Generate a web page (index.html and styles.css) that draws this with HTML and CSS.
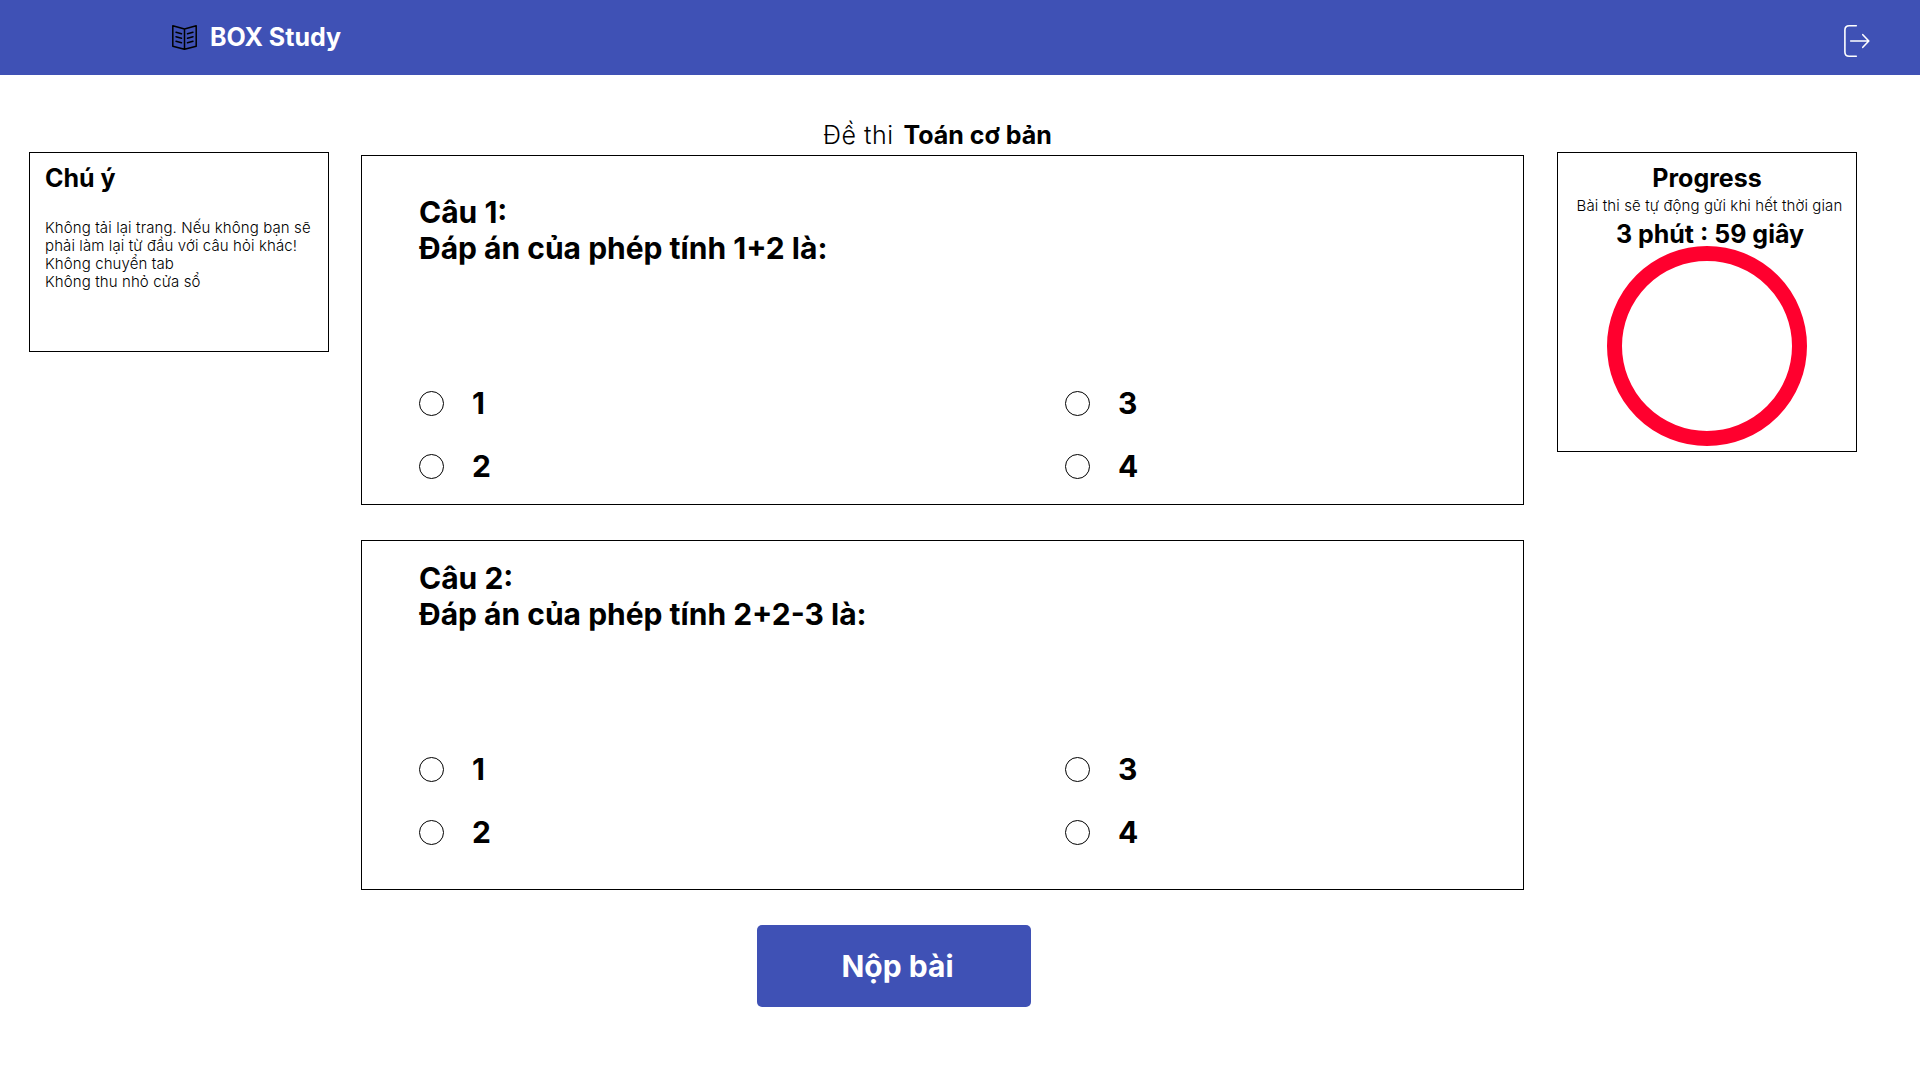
FILE: index.html
```html
<!DOCTYPE html>
<html lang="vi">
<head>
<meta charset="utf-8">
<title>BOX Study</title>
<link rel="stylesheet" href="styles.css">
</head>
<body>
<header class="header">
  <div class="brand">
    <svg class="book" viewBox="0 0 25 25" fill="none" stroke="#000" stroke-width="1.5" stroke-linejoin="round" stroke-linecap="round">
      <path d="M.8.8 12.5 4 24.2.8V21.2L12.5 24.3.8 21.2ZM12.5 4V24.3"/>
      <path d="M4 7.3 9.5 8.8M4 11.8 9.5 13.3M4 16.3 9.5 17.8M21 7.3 15.5 8.8M21 11.8 15.5 13.3M21 16.3 15.5 17.8"/>
    </svg>
    <span class="brand-name">BOX Study</span>
  </div>
  <svg class="logout" viewBox="0 0 26 34" fill="none" stroke="#fff" stroke-width="1.6" stroke-linecap="round" stroke-linejoin="round">
    <path d="M12.3 1.7H5.2Q.9 1.7.9 6V28Q.9 32.3 5.2 32.3H12.3M6.7 17H24.5M18.8 10.7 24.8 17 18.8 23.3"/>
  </svg>
</header>
<div class="page">
  <aside class="panel notice">
    <h2 class="panel-title">Chú ý</h2>
    <p class="small">Không tải lại trang. Nếu không bạn sẽ<br>phải làm lại từ đầu với câu hỏi khác!<br>Không chuyển tab<br>Không thu nhỏ cửa sổ</p>
  </aside>
  <main class="exam">
    <h1 class="exam-title"><span class="exam-label">Đề thi</span><span>Toán cơ bản</span></h1>
    <section class="question first">
      <h3 class="prompt">Câu 1:<br>Đáp án của phép tính 1+2 là:</h3>
      <div class="answers">
        <label class="answer"><input class="radio" type="radio" name="q1">1</label>
        <label class="answer"><input class="radio" type="radio" name="q1">3</label>
        <label class="answer"><input class="radio" type="radio" name="q1">2</label>
        <label class="answer"><input class="radio" type="radio" name="q1">4</label>
      </div>
    </section>
    <section class="question">
      <h3 class="prompt">Câu 2:<br>Đáp án của phép tính 2+2-3 là:</h3>
      <div class="answers">
        <label class="answer"><input class="radio" type="radio" name="q2">1</label>
        <label class="answer"><input class="radio" type="radio" name="q2">3</label>
        <label class="answer"><input class="radio" type="radio" name="q2">2</label>
        <label class="answer"><input class="radio" type="radio" name="q2">4</label>
      </div>
    </section>
    <button class="submit">Nộp bài</button>
  </main>
  <aside class="panel progress">
    <h2 class="panel-title">Progress</h2>
    <p class="small auto-send">Bài thi sẽ tự động gửi khi hết thời gian</p>
    <p class="panel-title timer">3 phút : 59 giây</p>
    <div class="ring"></div>
  </aside>
</div>
</body>
</html>
```
FILE: styles.css
```css
* { box-sizing: border-box; margin: 0; padding: 0; }
body { background: #fff; color: #000; font-family: Inter, sans-serif; height: 1080px; overflow: hidden; }
.header { height: 75px; background: #3f51b5; display: flex; justify-content: space-between; align-items: flex-start; padding: 22px 50px 0 172px; }
.brand { display: flex; align-items: flex-start; gap: 13px; }
.book { width: 25px; height: 25px; margin-top: 3px; }
.brand-name { font-size: 25px; line-height: 30px; font-weight: 700; color: #fff; }
.logout { width: 26px; height: 34px; margin-top: 2px; }
.page { display: grid; grid-template-columns: 300px 1163px 300px; column-gap: 32px; padding: 45px 0 0 29px; align-items: start; }
.panel { border: 1px solid #000; margin-top: 32px; }
.notice { height: 200px; padding: 10px 0 0 15px; }
.panel-title { font-size: 25px; line-height: 30px; font-weight: 700; white-space: nowrap; }
.small { font-size: 15px; line-height: 18px; font-weight: 300; letter-spacing: .11px; white-space: nowrap; }
.notice .small { margin-top: 26px; }
.progress { width: 300px; height: 300px; padding-top: 10px; margin-left: 1px; display: flex; flex-direction: column; align-items: center; }
.auto-send { margin: 4px 0 4px 5px; }
.timer { margin-left: 6px; }
.ring { width: 200px; height: 200px; flex: none; margin-top: -3px; border: 15px solid #ff002e; border-radius: 50%; }
.exam { display: flex; flex-direction: column; }
.exam-title { display: flex; gap: 10px; padding-left: 462px; height: 35px; font-size: 25px; line-height: 30px; font-weight: 700; white-space: nowrap; }
.exam-label { font-weight: 300; letter-spacing: .5px; }
.question { height: 350px; border: 1px solid #000; padding: 19px 0 0 57px; margin-bottom: 35px; }
.first { padding-top: 38px; }
.prompt { font-size: 30px; line-height: 36px; font-weight: 700; }
.answers { display: grid; grid-template-columns: 646px 1fr; row-gap: 27px; margin-top: 119px; }
.answer { display: flex; align-items: center; gap: 28px; font-size: 30px; line-height: 36px; font-weight: 700; }
.radio { appearance: none; width: 25px; height: 25px; border: 1px solid #000; border-radius: 50%; background: #fff; }
.submit { width: 274px; height: 82px; margin-left: 396px; border: 0; border-radius: 5px; background: #3f51b5; color: #fff; font: 700 30px/36px Inter, sans-serif; padding-left: 7px; }
```
